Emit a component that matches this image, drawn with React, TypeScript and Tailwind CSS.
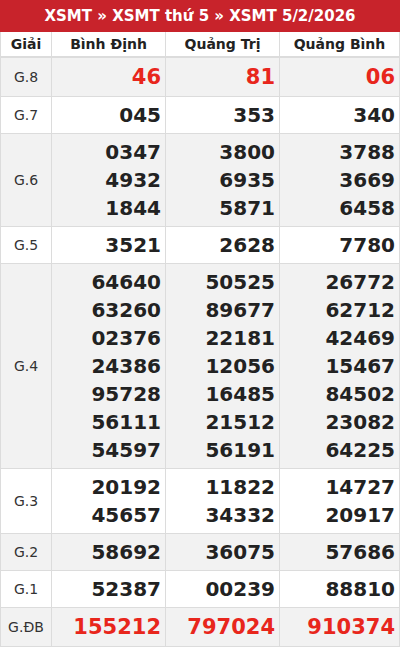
import React from 'react'

type Row = {
  label: string
  values: string[][]
  big?: boolean
}

const rows: Row[] = [
  { label: 'G.8', values: [['46'], ['81'], ['06']], big: true },
  { label: 'G.7', values: [['045'], ['353'], ['340']] },
  {
    label: 'G.6',
    values: [
      ['0347', '4932', '1844'],
      ['3800', '6935', '5871'],
      ['3788', '3669', '6458'],
    ],
  },
  { label: 'G.5', values: [['3521'], ['2628'], ['7780']] },
  {
    label: 'G.4',
    values: [
      ['64640', '63260', '02376', '24386', '95728', '56111', '54597'],
      ['50525', '89677', '22181', '12056', '16485', '21512', '56191'],
      ['26772', '62712', '42469', '15467', '84502', '23082', '64225'],
    ],
  },
  {
    label: 'G.3',
    values: [
      ['20192', '45657'],
      ['11822', '34332'],
      ['14727', '20917'],
    ],
  },
  { label: 'G.2', values: [['58692'], ['36075'], ['57686']] },
  { label: 'G.1', values: [['52387'], ['00239'], ['88810']] },
  { label: 'G.ĐB', values: [['155212'], ['797024'], ['910374']], big: true },
]

const provinces = ['Bình Định', 'Quảng Trị', 'Quảng Bình']

export default function App() {
  return (
    <div className="w-[400px] bg-white font-['DejaVu_Sans',sans-serif] text-[#222]">
      {/* Title */}
      <div className="h-[32px] bg-[#c8232b] flex items-center justify-center text-white font-bold text-[15px]">
        XSMT » XSMT thứ 5 » XSMT 5/2/2026
      </div>

      <div className="grid grid-cols-[51px_114px_114px_1fr] border-l border-[#dcdcdc]">
        {/* Header */}
        <div className="h-[26px] flex items-center justify-center border-r border-b-2 border-[#dcdcdc] font-bold text-[14px]">
          Giải
        </div>
        {provinces.map((p) => (
          <div
            key={p}
            className="h-[26px] flex items-center justify-center border-r border-b-2 border-[#dcdcdc] font-bold text-[14px]"
          >
            {p}
          </div>
        ))}

        {rows.map((row, i) => {
          const bg = i % 2 === 0 ? 'bg-[#f2f2f2]' : 'bg-white'
          return (
            <React.Fragment key={row.label}>
              <div
                className={`${bg} flex items-center justify-center border-r border-b border-[#dcdcdc] text-[14px] text-[#333]`}
              >
                {row.label}
              </div>
              {row.values.map((col, j) => (
                <div
                  key={j}
                  className={`${bg} flex flex-col items-end justify-center py-1 pr-[4px] border-r border-b border-[#dcdcdc] font-bold`}
                >
                  {col.map((n) => (
                    <span
                      key={n}
                      className={
                        row.big
                          ? 'text-[21px] leading-[30px] text-[#e8261c]'
                          : 'text-[20px] leading-[28px] text-[#222]'
                      }
                    >
                      {n}
                    </span>
                  ))}
                </div>
              ))}
            </React.Fragment>
          )
        })}
      </div>
    </div>
  )
}
